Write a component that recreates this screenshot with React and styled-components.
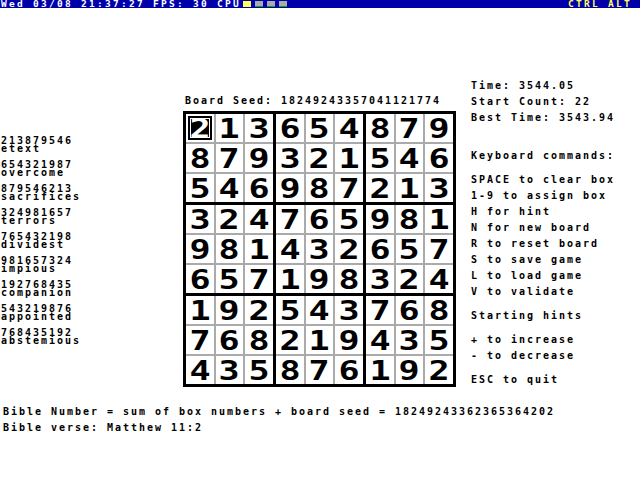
import React from "react";
import styled, { createGlobalStyle } from "styled-components";

const Global = createGlobalStyle`
  html, body { margin: 0; padding: 0; background: #fff; }
  body {
    font-family: "DejaVu Sans Mono", "Liberation Mono", monospace;
    font-weight: bold;
    font-size: 10px;
    letter-spacing: 1.98px;
    color: #000;
  }
`;

const Screen = styled.div`
  width: 640px;
  height: 480px;
  display: flex;
  flex-direction: column;
`;

const TopBar = styled.div`
  height: 8px;
  background: #0000aa;
  display: flex;
  align-items: flex-start;
  padding: 0 8px 0 0;
  color: #fff;
`;

const BarText = styled.span`
  color: ${(p) => p.$color || "#fff"};
  white-space: pre;
  font-size: 9.5px;
  letter-spacing: 2.28px;
  line-height: 8px;
  height: 8px;
  padding-left: ${(p) => p.$pl || 0}px;
`;

const CpuBoxes = styled.div`
  display: flex;
  gap: 4px;
  margin: 1px 0 0 2px;
`;

const CpuBox = styled.div`
  width: 8px;
  height: 6px;
  background: ${(p) => (p.$active ? "#ffff55" : "#aaaaaa")};
  border-bottom: ${(p) => (p.$active ? "0" : "1px solid #00aa00")};
  box-sizing: border-box;
`;

const Spacer = styled.div`
  flex: 1;
`;

const Main = styled.div`
  height: 400px;
  display: grid;
  grid-template-columns: 183px 288px 1fr;
`;

const LeftCol = styled.div`
  padding: 129px 0 0 1px;
  display: flex;
  flex-direction: column;
  gap: 8px;
`;

const Entry = styled.div`
  display: flex;
  flex-direction: column;
`;

const Line = styled.div`
  height: 8px;
  line-height: 8px;
  white-space: pre;
  margin-top: ${(p) => p.$mt || 0}px;
`;

const Center = styled.div`
  padding-top: 89px;
  display: flex;
  flex-direction: column;
`;

const SeedLine = styled(Line)`
  padding-left: 2px;
`;

const Board = styled.div`
  margin-top: 6px;
  width: 273px;
  height: 276px;
  box-sizing: border-box;
  background: #000;
  padding: 3px;
  display: grid;
  grid-template-columns: repeat(3, 87px);
  grid-template-rows: repeat(3, 88px);
  gap: 3px;
`;

const Block = styled.div`
  background: #aaaaaa;
  display: grid;
  grid-template-columns: 28px 27px 28px;
  grid-template-rows: repeat(3, 28px);
  gap: 2px;
`;

const Cell = styled.div`
  background: #fff;
  display: flex;
  align-items: center;
  justify-content: center;
`;

const Digit = styled.span`
  display: inline-block;
  font-family: "DejaVu Sans Mono", monospace;
  font-weight: bold;
  font-size: 27px;
  letter-spacing: 0;
  line-height: 22px;
  height: 22px;
  transform: scaleX(1.3);
  color: ${(p) => (p.$inverse ? "#fff" : "#000")};
  margin-top: 1px;
`;

const Cursor = styled.div`
  width: 24px;
  height: 24px;
  box-sizing: border-box;
  border: 2px solid #000;
  background: #000;
  box-shadow: inset 0 0 0 1px #fff;
  display: flex;
  align-items: center;
  justify-content: center;
`;

const RightCol = styled.div`
  padding-top: 74px;
  display: flex;
  flex-direction: column;
`;

const Footer = styled.div`
  padding-left: 3px;
  display: flex;
  flex-direction: column;
`;

const board = [
  "213654879",
  "879321546",
  "546987213",
  "324765981",
  "981432657",
  "657198324",
  "192543768",
  "768219435",
  "435876192",
];

const entries = [
  ["213879546", "etext"],
  ["654321987", "overcome"],
  ["879546213", "sacrifices"],
  ["324981657", "terrors"],
  ["765432198", "dividest"],
  ["981657324", "impious"],
  ["192768435", "companion"],
  ["543219876", "appointed"],
  ["768435192", "abstemious"],
];

const rightLines = [
  ["Time: 3544.05", 0],
  ["Start Count: 22", 8],
  ["Best Time: 3543.94", 8],
  ["Keyboard commands:", 30],
  ["SPACE to clear box", 16],
  ["1-9 to assign box", 8],
  ["H for hint", 8],
  ["N for new board", 8],
  ["R to reset board", 8],
  ["S to save game", 8],
  ["L to load game", 8],
  ["V to validate", 8],
  ["Starting hints", 16],
  ["+ to increase", 16],
  ["- to decrease", 8],
  ["ESC to quit", 16],
];

function BoardView() {
  const blocks = [];
  for (let br = 0; br < 3; br++) {
    for (let bc = 0; bc < 3; bc++) {
      const cells = [];
      for (let r = 0; r < 3; r++) {
        for (let c = 0; c < 3; c++) {
          const row = br * 3 + r;
          const col = bc * 3 + c;
          const d = board[row][col];
          const selected = row === 0 && col === 0;
          cells.push(
            <Cell key={`${r}-${c}`}>
              {selected ? (
                <Cursor>
                  <Digit $inverse>{d}</Digit>
                </Cursor>
              ) : (
                <Digit>{d}</Digit>
              )}
            </Cell>
          );
        }
      }
      blocks.push(<Block key={`${br}-${bc}`}>{cells}</Block>);
    }
  }
  return <Board>{blocks}</Board>;
}

export default function App() {
  return (
    <>
      <Global />
      <Screen>
        <TopBar>
          <BarText $pl={1}>Wed 03/08 21:37:27 FPS: 30 CPU</BarText>
          <CpuBoxes>
            <CpuBox $active />
            <CpuBox />
            <CpuBox />
            <CpuBox />
          </CpuBoxes>
          <Spacer />
          <BarText $color="#ffff55">CTRL ALT</BarText>
        </TopBar>
        <Main>
          <LeftCol>
            {entries.map(([n, w]) => (
              <Entry key={n}>
                <Line>{n}</Line>
                <Line>{w}</Line>
              </Entry>
            ))}
          </LeftCol>
          <Center>
            <SeedLine>Board Seed: 18249243357041121774</SeedLine>
            <BoardView />
          </Center>
          <RightCol>
            {rightLines.map(([t, mt]) => (
              <Line key={t} $mt={mt}>
                {t}
              </Line>
            ))}
          </RightCol>
        </Main>
        <Footer>
          <Line>Bible Number = sum of box numbers + board seed = 18249243362365364202</Line>
          <Line $mt={8}>Bible verse: Matthew 11:2</Line>
        </Footer>
      </Screen>
    </>
  );
}
